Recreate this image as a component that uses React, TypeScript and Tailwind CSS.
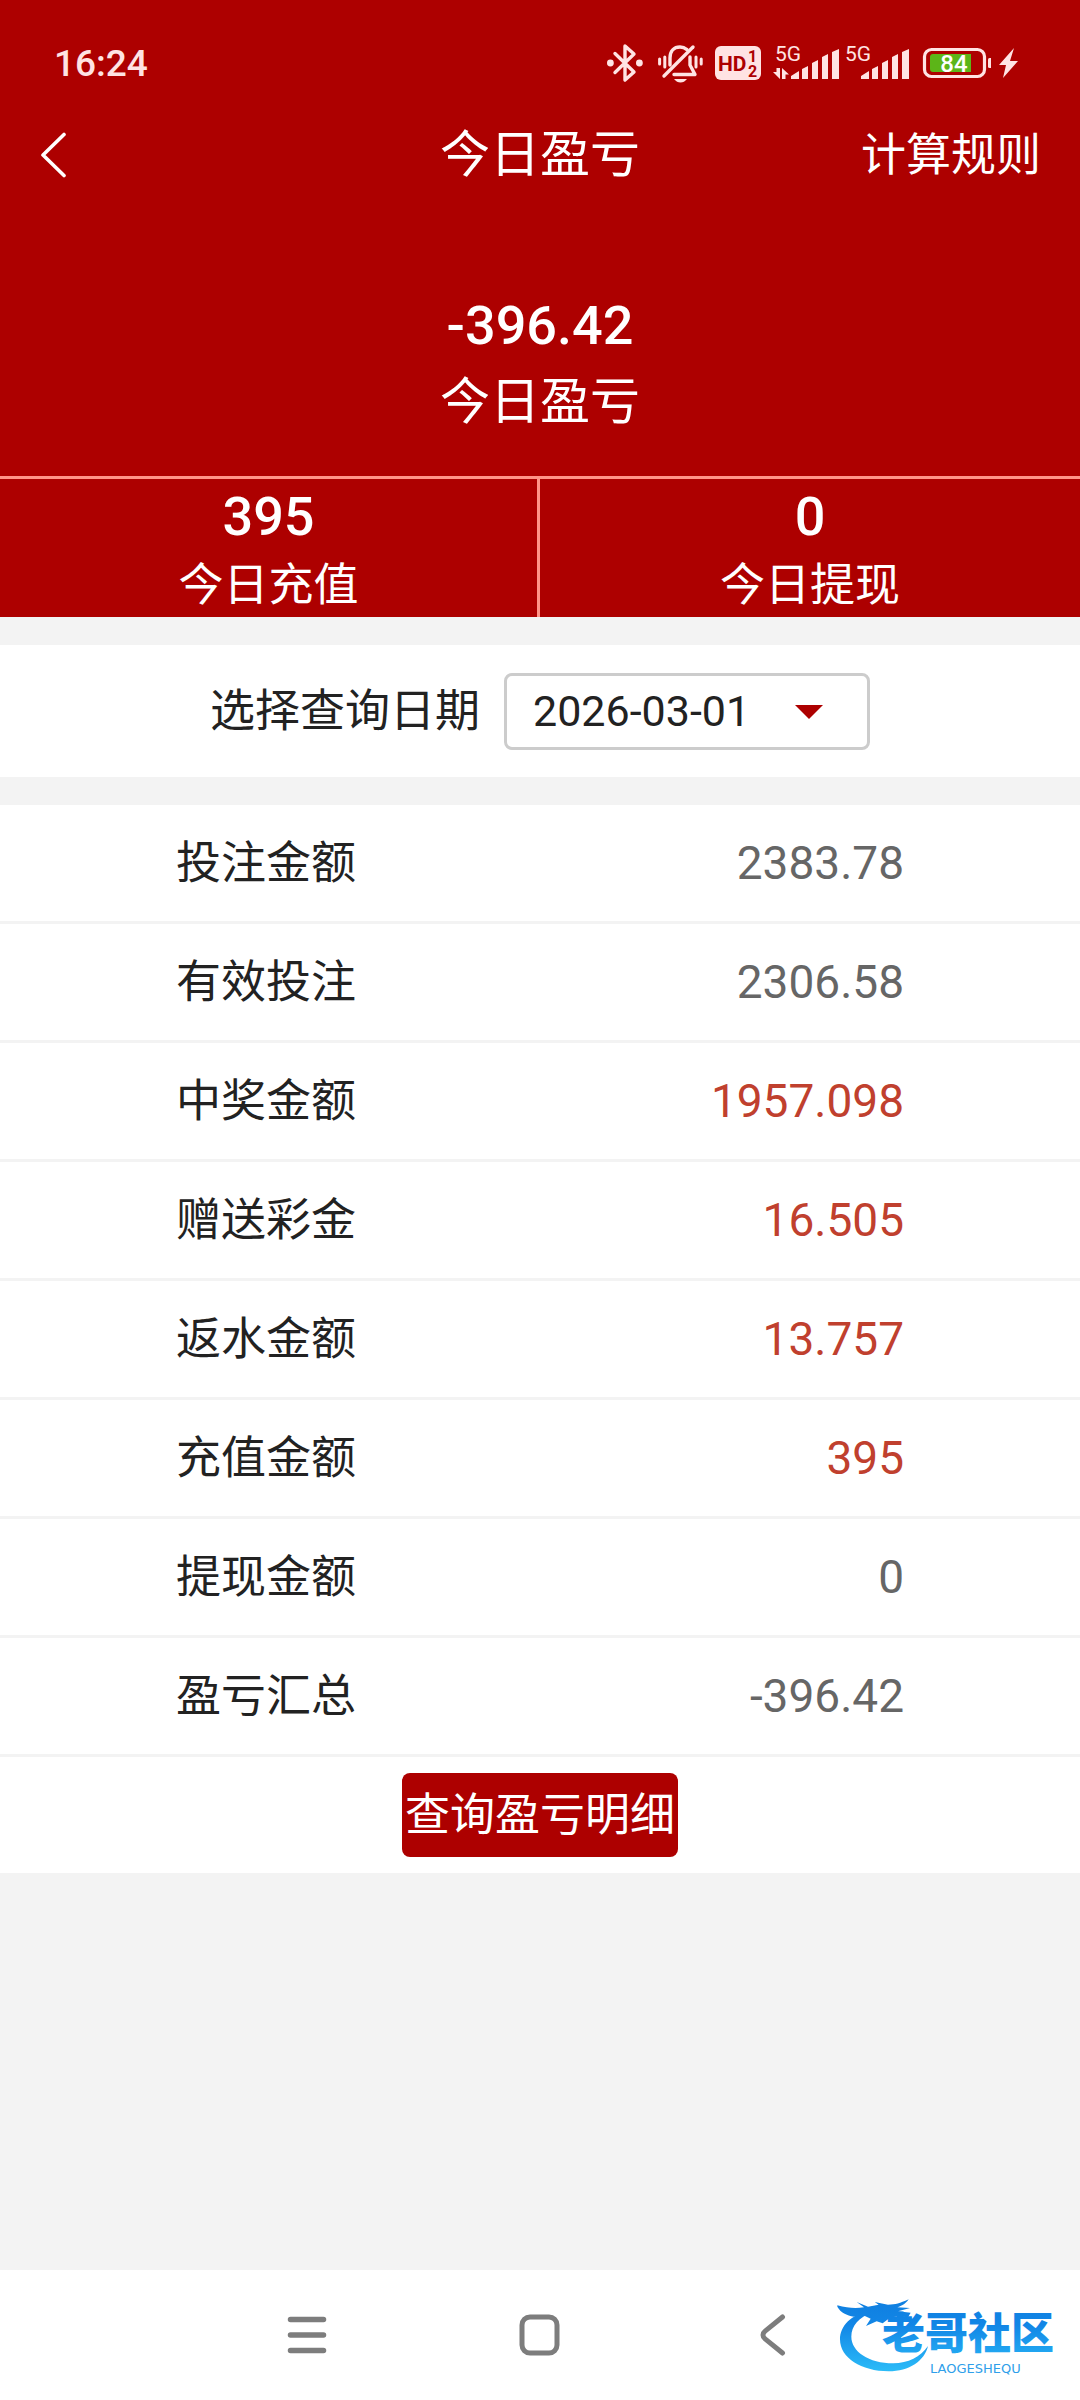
import React, { useState } from 'react';

type Row = {
  label: string;
  value: string;
  highlight?: boolean;
};

const rows: Row[] = [
  { label: '投注金额', value: '2383.78' },
  { label: '有效投注', value: '2306.58' },
  { label: '中奖金额', value: '1957.098', highlight: true },
  { label: '赠送彩金', value: '16.505', highlight: true },
  { label: '返水金额', value: '13.757', highlight: true },
  { label: '充值金额', value: '395', highlight: true },
  { label: '提现金额', value: '0' },
  { label: '盈亏汇总', value: '-396.42' },
];

const stats = [
  { label: '今日充值', value: '395' },
  { label: '今日提现', value: '0' },
];

function BluetoothIcon() {
  return (
    <svg width="36" height="40" viewBox="0 0 36 40" fill="none" stroke="#ffe3e3" strokeWidth="3.4" strokeLinejoin="round" strokeLinecap="round">
      <path d="M8 10.5 27 29 18 37V3l9 8L8 29.5" />
      <circle cx="3.4" cy="20" r="3.4" fill="#ffe3e3" stroke="none" />
      <circle cx="32.4" cy="20" r="3.4" fill="#ffe3e3" stroke="none" />
    </svg>
  );
}

function BellOffIcon() {
  return (
    <svg width="48" height="40" viewBox="0 0 48 40" fill="none" stroke="#ffe3e3" strokeWidth="3.4" strokeLinecap="round">
      <path d="M15 22v-7C15 8 19 4 25 4c3 0 5 1 7 2.600" />
      <path d="M35 14v8l5 9.500H19" strokeLinejoin="round" />
      <path d="M38 4 9 33" />
      <path d="M19 36h13c-2 2.500-4 3.500-6.500 3.500S21 38.500 19 36Z" fill="#ffe3e3" stroke="none" />
      <path d="M4.600 16v5M9.800 14v10M41 14v10M46.200 16v5" strokeWidth="3" />
    </svg>
  );
}

function HdIcon() {
  return (
    <svg width="46" height="40" viewBox="0 0 46 40">
      <rect y="3" width="46" height="34" rx="6" fill="#ffe3e3" />
      <g fill="#ad0000" fontFamily="Roboto, sans-serif" fontWeight="700">
        <text x="3" y="28" fontSize="21">HD</text>
        <text x="33" y="19" fontSize="16">1</text>
        <text x="33" y="34" fontSize="16">2</text>
      </g>
    </svg>
  );
}

function SignalIcon({ arrows = false }: { arrows?: boolean }) {
  return (
    <svg width={arrows ? 66 : 63} height="40" viewBox={arrows ? '0 0 66 40' : '3 0 63 40'} fill="#ffe3e3">
      <text x="2" y="18" fontSize="21" fontFamily="Roboto, sans-serif">5G</text>
      {arrows && <path d="M3.500 25H7v11L0 29h3.500ZM9 36V25l7 6.500h-3.500V36Z" />}
      <path d="M18 36v-3l8-5v8ZM29 36V26l6-3v13ZM39 36V20l6-3v19ZM49 36V14l6-3v25ZM59 36V9l7-3v30Z" />
    </svg>
  );
}

function BatteryIcon() {
  return (
    <svg width="70" height="40" viewBox="0 0 70 40">
      <rect x="3.500" y="6.500" width="60" height="27" rx="7" fill="none" stroke="#ffe3e3" strokeWidth="3.200" />
      <path d="M12 11h38v18H12a3 3 0 0 1-3-3V14a3 3 0 0 1 3-3Z" fill="#5cb518" />
      <rect x="67" y="15" width="4" height="10" rx="1.500" fill="#ffe3e3" />
      <text x="33" y="28.500" textAnchor="middle" fill="#fff" fontSize="24" fontWeight="500" fontFamily="Roboto, sans-serif">84</text>
    </svg>
  );
}

function BoltIcon() {
  return (
    <svg width="20" height="40" viewBox="0 0 20 40" fill="#ffe3e3">
      <path d="M15 5 0 22h7L4 35l15-17h-8Z" />
    </svg>
  );
}

function StatusBar() {
  return (
    <div className="flex h-[102px] items-center justify-between pt-6 pr-[61px] pl-[54px] text-[#ffe3e3]">
      <span className="text-[37px] leading-none font-medium">16:24</span>
      <div className="flex items-center gap-3">
        <BluetoothIcon />
        <BellOffIcon />
        <HdIcon />
        <div className="flex gap-[7px]">
          <SignalIcon arrows />
          <SignalIcon />
        </div>
        <div className="flex gap-2">
          <BatteryIcon />
          <BoltIcon />
        </div>
      </div>
    </div>
  );
}

function Watermark() {
  return (
    <svg className="absolute right-0 bottom-[10px]" width="260" height="110" viewBox="0 0 780 330" role="img" aria-label="老哥社区">
      <defs>
        <linearGradient id="wm" x1="0" y1="60" x2="0" y2="275" gradientUnits="userSpaceOnUse">
          <stop offset="0" stopColor="#0f7fe0" />
          <stop offset="0.35" stopColor="#1286e6" />
          <stop offset="1" stopColor="#2bbcf8" />
        </linearGradient>
      </defs>
      <g fill="url(#wm)">
        <path d="M150 92C92 104 60 138 60 178c0 56 64 96 146 96 62 0 108-32 118-76-22 32-60 52-104 52-74 0-126-36-126-80 0-32 22-58 66-74Z" />
        <path d="M52 76c30 8 54 10 80 6l-22-16 34 14 32-6-12-8 40 8c24 0 34-4 62-16-10 14-20 20-34 24l38 2-36 10 38 4-8 14-34-4-24 8-18 14-18-6-32 14 14-22-22-10-28 4c-22-4-40-12-50-30Z" />
        <text x="186" y="206" fontSize="129" fontWeight="900" fontFamily="'Noto Sans CJK SC', sans-serif">老哥社区</text>
      </g>
      <text x="330" y="280" fontSize="39" fill="#2f9fea" fontFamily="'DejaVu Sans', sans-serif">LAOGESHEQU</text>
    </svg>
  );
}

function NavBar() {
  return (
    <nav className="relative flex h-[130px] items-center bg-white px-[190px]">
      <button aria-label="菜单" className="flex h-full flex-1 items-center justify-center">
        <svg width="40" height="42" viewBox="0 0 40 42" stroke="#7d7d7d" strokeWidth="5.500" strokeLinecap="round">
          <path d="M3.500 5.500h33M3.500 21h33M3.500 36.500h33" />
        </svg>
      </button>
      <button aria-label="主页" className="flex h-full flex-1 items-center justify-center">
        <svg width="42" height="42" viewBox="0 0 42 42" fill="none" stroke="#7d7d7d" strokeWidth="5">
          <rect x="3" y="3" width="35" height="36" rx="8" />
        </svg>
      </button>
      <button aria-label="返回" className="flex h-full flex-1 items-center justify-center">
        <svg width="26" height="42" viewBox="0 0 26 42" fill="none" stroke="#7d7d7d" strokeWidth="5" strokeLinecap="round">
          <path d="M22.500 3 4.800 17.400a4.500 4.500 0 0 0 0 7.200L22.500 39" />
        </svg>
      </button>
      <Watermark />
    </nav>
  );
}

export default function App() {
  const [date, setDate] = useState('2026-03-01');

  return (
    <div className="flex min-h-screen flex-col bg-[#f3f3f3] font-[Roboto,'Noto_Sans_CJK_SC',sans-serif] text-[45px] text-[#222]">
      <header className="bg-[#ad0000] text-white">
        <StatusBar />
        <div className="grid h-[102px] grid-cols-3 items-center px-[39px] pt-1">
          <button aria-label="返回" className="justify-self-start">
            <svg width="30" height="46" viewBox="0 0 30 46" fill="none" stroke="#fff" strokeWidth="3.600" strokeLinecap="round" strokeLinejoin="round">
              <path d="M25 2.500 4 23l21 20.500" />
            </svg>
          </button>
          <h1 className="text-center text-[50px] leading-none">今日盈亏</h1>
          <a href="#rules" className="justify-self-end leading-none">计算规则</a>
        </div>

        <div className="pt-[84px] pb-9 text-center leading-[76px]">
          <p className="text-[54px] font-medium">-396.42</p>
          <p className="text-[50px]">今日盈亏</p>
        </div>

        <div className="grid h-[141px] grid-cols-2 divide-x-3 divide-[#ff9488] border-t-3 border-[#ff9488] text-center leading-[69px]">
          {stats.map((stat) => (
            <div key={stat.label} className="h-[138px] pt-[3px]">
              <p className="text-[54px] font-medium">{stat.value}</p>
              <p>{stat.label}</p>
            </div>
          ))}
        </div>
      </header>

      <main>
        <div className="my-7 flex h-[132px] items-center justify-center gap-6 bg-white">
          <label htmlFor="date" className="leading-none">选择查询日期</label>
          <div className="relative">
            <select
              id="date"
              value={date}
              onChange={(e) => setDate(e.target.value)}
              className="block h-[77px] w-[366px] appearance-none rounded-lg border-3 border-[#ccc] bg-white pl-[26px] text-[43px] leading-none"
            >
              <option value="2026-03-01">2026-03-01</option>
              <option value="2026-02-28">2026-02-28</option>
            </select>
            <svg className="pointer-events-none absolute top-8 right-[47px]" width="28" height="14" viewBox="0 0 28 14" fill="#ad0000">
              <path d="M0 0h28L14 14Z" />
            </svg>
          </div>
        </div>

        <div className="bg-white">
          <table className="w-full border-separate border-spacing-0">
            <tbody>
              {rows.map((row) => (
                <tr key={row.label} className="h-[119px]">
                  <th scope="row" className="border-b-3 border-[#f3f3f3] pl-44 text-left leading-none font-normal">
                    {row.label}
                  </th>
                  <td className={`border-b-3 border-[#f3f3f3] pr-44 text-right text-[46px] leading-none ${row.highlight ? 'text-[#c0402e]' : 'text-[#666]'}`}>
                    {row.value}
                  </td>
                </tr>
              ))}
            </tbody>
          </table>
          <div className="flex justify-center py-4">
            <button className="h-[84px] rounded-lg bg-[#ad0000] px-[3px] leading-none text-white">
              查询盈亏明细
            </button>
          </div>
        </div>
      </main>

      <footer className="mt-auto">
        <NavBar />
      </footer>
    </div>
  );
}
